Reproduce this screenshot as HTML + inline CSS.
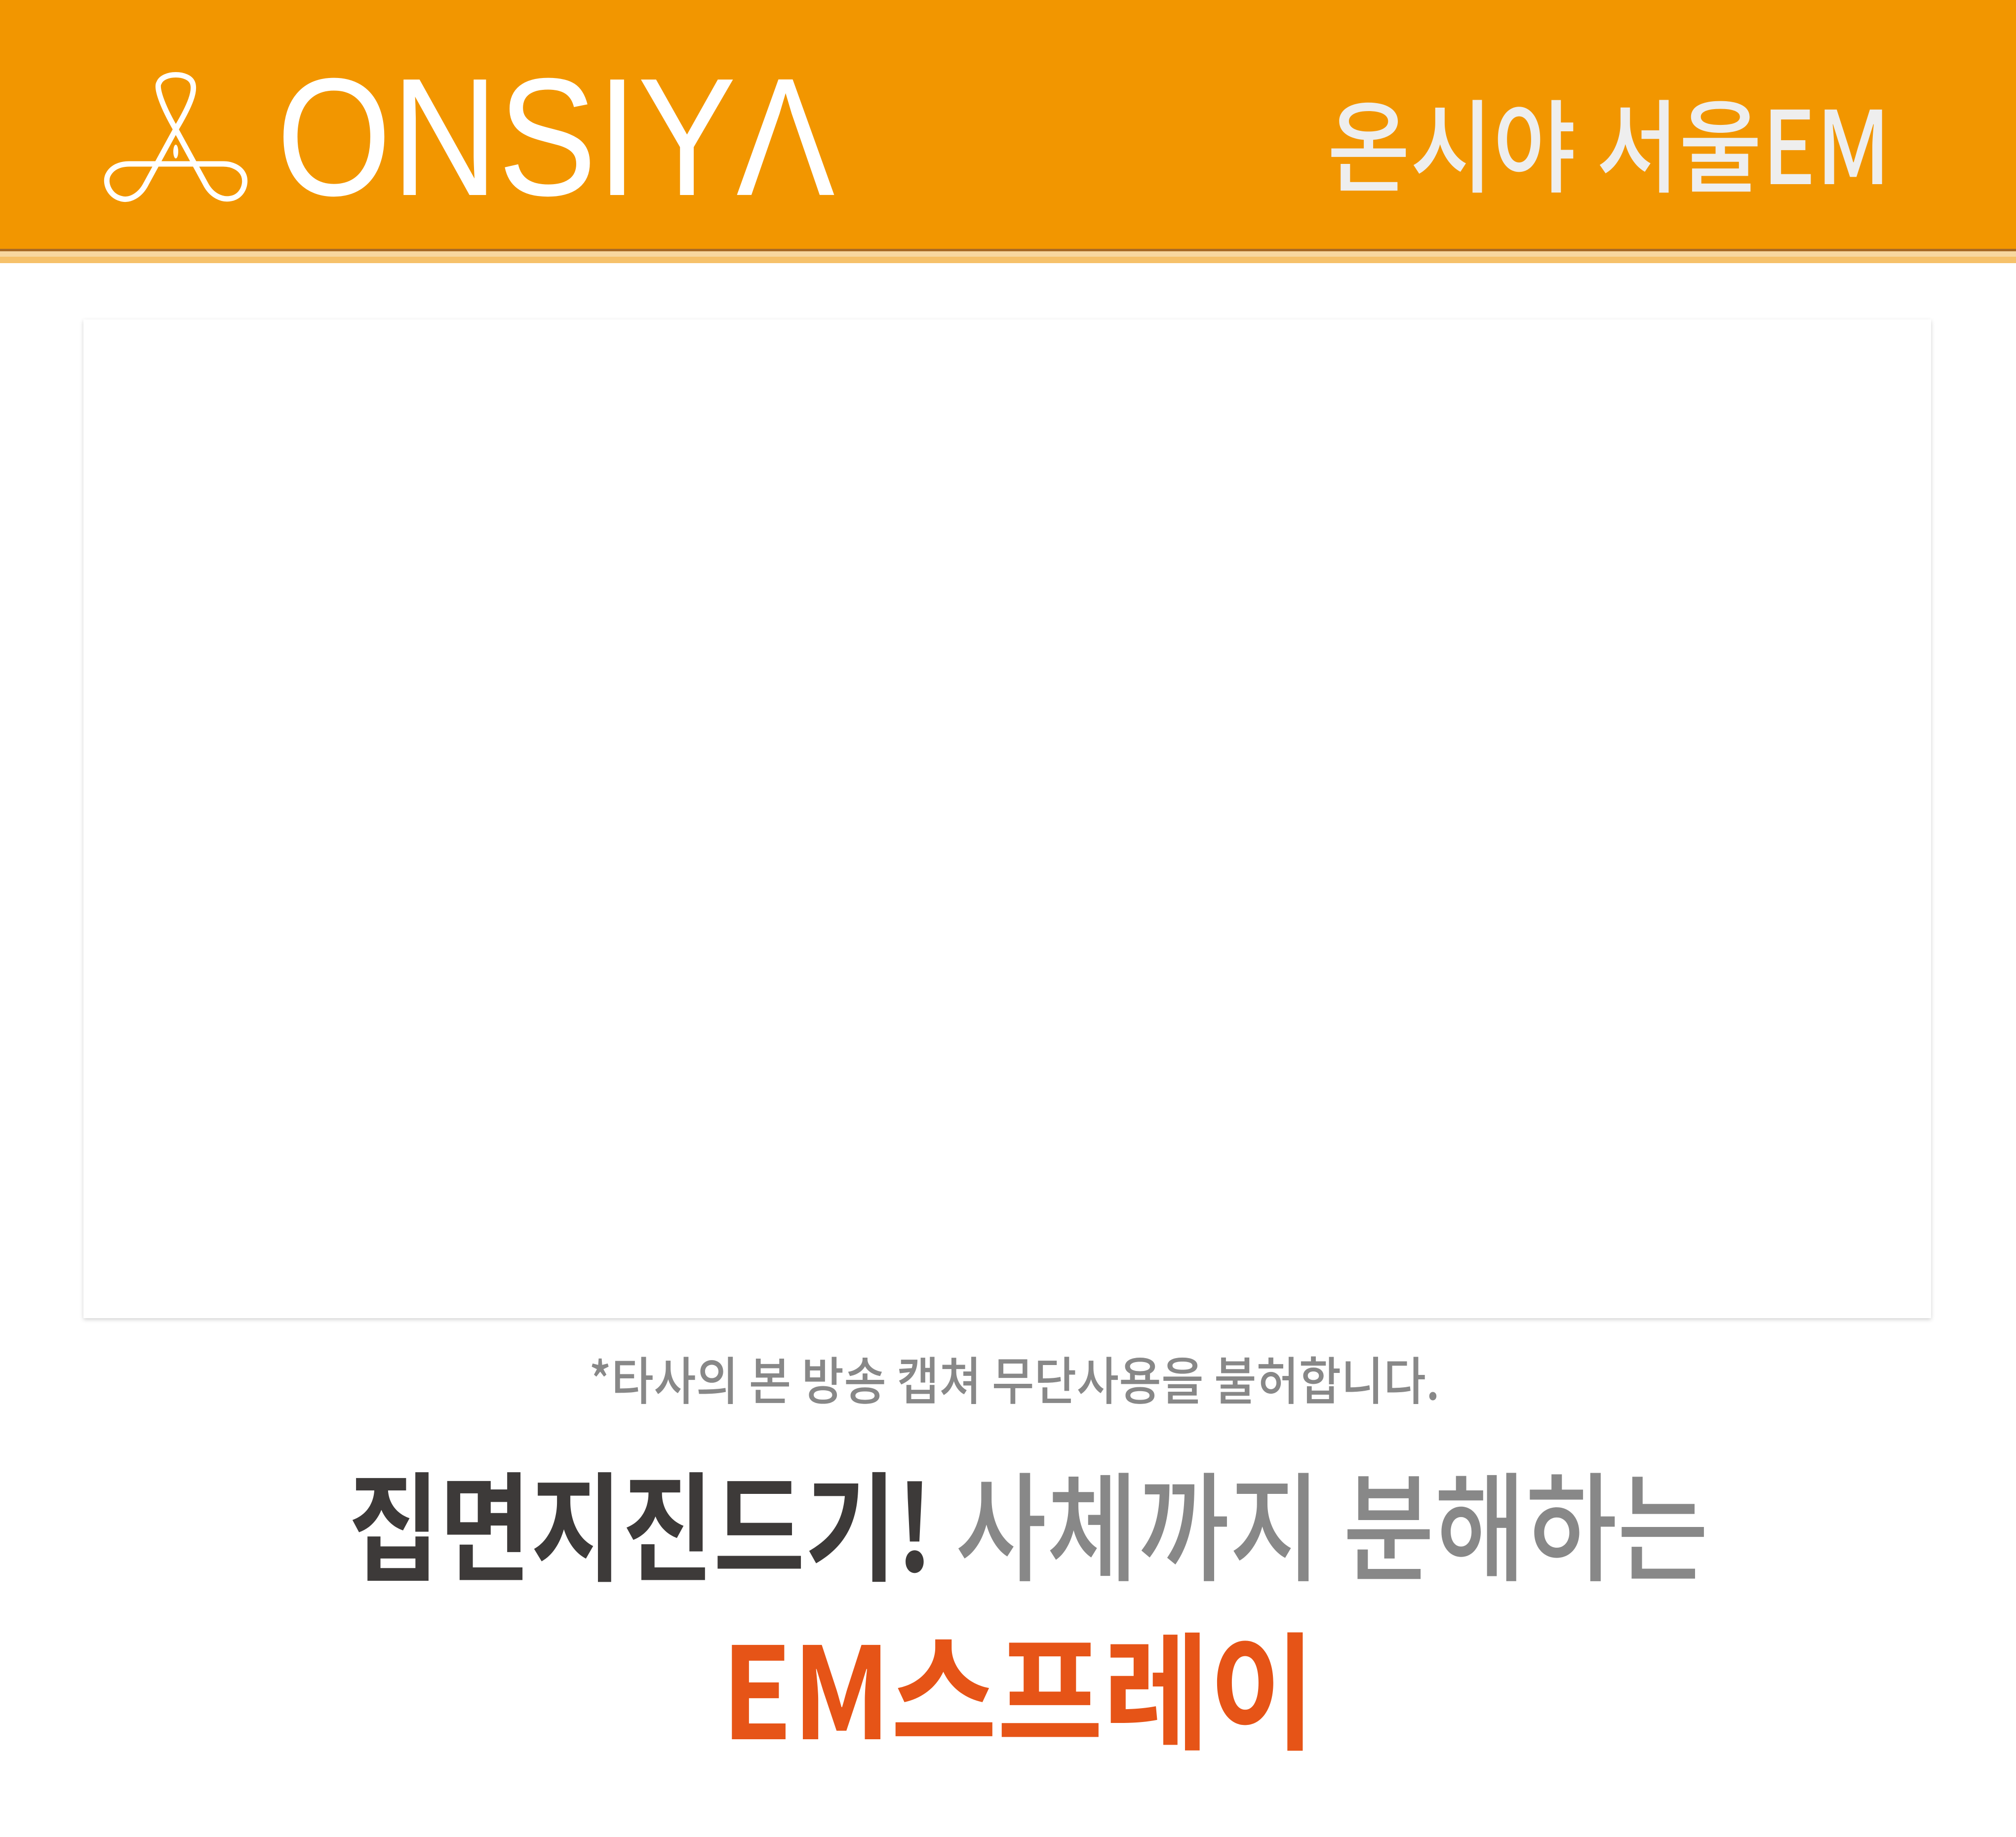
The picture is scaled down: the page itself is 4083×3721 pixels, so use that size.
<!DOCTYPE html>
<html><head><meta charset="utf-8"><style>
html,body{margin:0;padding:0;background:#fff;}
body{width:4083px;height:3721px;position:relative;overflow:hidden;font-family:"Liberation Sans","Noto Sans CJK KR",sans-serif;}
.hdr{position:absolute;left:0;top:0;width:4083px;height:504px;background:#f29600;}
.l1{position:absolute;left:0;top:504px;width:4083px;height:5px;background:#a86a25;}
.l2{position:absolute;left:0;top:509px;width:4083px;height:11px;background:#f8d79f;}
.l3{position:absolute;left:0;top:520px;width:4083px;height:13px;background:#f6c16a;}
.t{position:absolute;white-space:nowrap;transform-origin:0 0;line-height:1;}
.box{position:absolute;left:169px;top:647px;width:3742px;height:2023px;background:#fff;box-shadow:0 3px 8px rgba(0,0,0,0.18);}
</style></head><body>
<div class="hdr"></div><div class="l1"></div><div class="l2"></div><div class="l3"></div>
<svg style="position:absolute;left:0;top:0" width="600" height="500" viewBox="0 0 600 500">
<g fill="none" stroke="#fff" stroke-width="11" stroke-linecap="round">
<path d="M356 262 C326 210 316 176 322 168 C330 146 382 146 390 168 C396 184 386 212 356 262"/>
<path d="M356 262 L296 372 C284 396 262 408 244 402 C222 396 212 372 218 356 C226 338 244 332 262 332 L452 332 C470 332 488 340 494 356 C500 374 490 398 468 402 C450 406 428 396 416 372 L356 262"/>
</g>
<ellipse cx="356" cy="307" rx="5" ry="14" fill="#fff"/>
</svg>
<div class="t" style="left:560px;top:108px;font-size:340px;color:#fff;transform:scaleX(0.88);">ONSIYΛ</div>
<div class="t" style="left:2688px;top:182px;font-size:205px;color:#eeeeee;font-weight:500;transform:scaleX(0.89);font-family:'Noto Sans CJK KR','Liberation Sans',sans-serif;">온시야 서울EM</div>
<div class="box"></div>
<div class="t" style="left:1193px;top:2738px;font-size:104px;color:#888;font-weight:500;font-family:'Noto Sans CJK KR',sans-serif;transform:scaleX(0.897);">*타사의 본 방송 캡쳐 무단사용을 불허합니다.</div>
<div class="t" style="left:705px;top:2960px;font-size:240px;font-family:'Noto Sans CJK KR',sans-serif;transform:scaleX(0.838);"><span style="color:#3d3a39;font-weight:700;">집면지진드기!</span> <span style="color:#888;font-weight:500;">사체까지 분해하는</span></div>
<div class="t" style="left:1461px;top:3283px;font-size:258px;color:#e65417;font-weight:700;font-family:'Noto Sans CJK KR',sans-serif;transform:scaleX(0.906);">EM스프레이</div>
</body></html>
